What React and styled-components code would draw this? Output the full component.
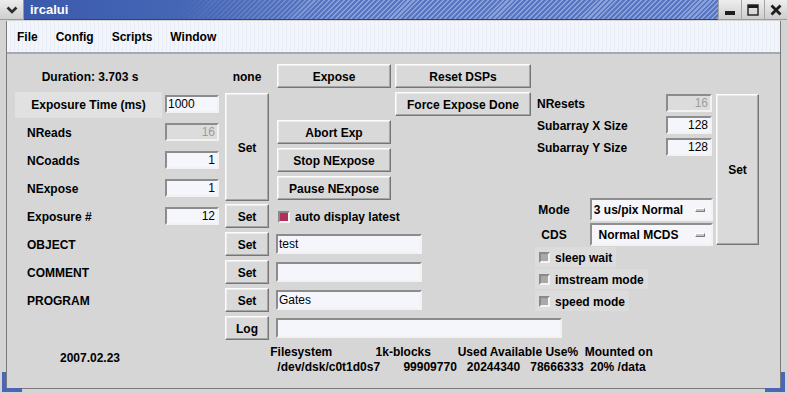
import React from 'react';
import styled, { createGlobalStyle, css } from 'styled-components';

const GlobalStyle = createGlobalStyle`
  html, body {
    margin: 0;
    padding: 0;
    background: #d4d4d4;
  }
  body {
    font-family: "Liberation Sans", Arial, Helvetica, sans-serif;
    font-size: 12px;
    color: #000;
  }
`;

const raised = css`
  border: 1px solid;
  border-color: #fcfcfc #767676 #767676 #fcfcfc;
  box-shadow: inset -1px -1px 0 #a6a6a6, inset 1px 1px 0 #ebebeb;
`;

const sunken = css`
  border: 2px solid;
  border-color: #8c8c8c #f2f2f2 #f2f2f2 #8c8c8c;
`;

const Window = styled.div`
  position: relative;
  width: 787px;
  height: 393px;
  display: flex;
  flex-direction: column;
  background: #d4d4d4;
  overflow: hidden;
`;

const TitleBar = styled.div`
  height: 20px;
  display: flex;
  box-sizing: border-box;
`;

const MenuButton = styled.div`
  width: 23px;
  display: flex;
  align-items: center;
  justify-content: center;
  background: linear-gradient(#ececec, #cfcfcf);
  border-right: 1px solid #9a9a9a;
  border-bottom: 1px solid #9a9a9a;
`;

const Caption = styled.div`
  flex: 1;
  display: flex;
  align-items: center;
  padding-left: 6px;
  color: #fff;
  font-weight: bold;
  font-size: 13px;
  border-bottom: 1px solid #2c4383;
  background:
    linear-gradient(90deg, #3b5aac 0%, #4565b5 22%, rgba(76, 106, 186, 0) 45%),
    repeating-linear-gradient(135deg, #5876c2 0px, #5876c2 2px, #8aa1da 2px, #8aa1da 3.5px);
`;

const WinButton = styled.div`
  width: 22px;
  display: flex;
  align-items: center;
  justify-content: center;
  background: linear-gradient(#eeeeee, #cdcdcd);
  border-left: 1px solid #a4a4a4;
  border-bottom: 1px solid #9a9a9a;
`;

const Body = styled.div`
  flex: 1;
  display: flex;
  padding: 1px 6px 4px 6px;
`;

const Client = styled.div`
  flex: 1;
  display: flex;
  flex-direction: column;
  border: 1px solid #7a7a7a;
  border-top: none;
  background: #d6d6d6;
`;

const MenuBar = styled.div`
  height: 31px;
  display: flex;
  align-items: center;
  padding-left: 1px;
  background: repeating-linear-gradient(90deg, #f2f5fb 0px, #f2f5fb 3px, #e9edf6 3px, #e9edf6 4px);
  border-bottom: 2px solid #a7a9b2;
`;

const MenuItem = styled.div`
  padding: 0 9px;
  font-weight: bold;
  font-size: 12px;
`;

const Panel = styled.div`
  flex: 1;
  display: grid;
  grid-template-columns: 150px 60px 52px 118px 140px 131px 50px 43px;
  grid-template-rows: repeat(10, 28px) auto;
  align-content: start;
  padding: 8px 0 0 8px;
  font-weight: bold;
`;

const Cell = styled.div`
  grid-column: ${p => p.$col};
  grid-row: ${p => p.$row};
  align-self: center;
  justify-self: ${p => p.$justify || 'stretch'};
  text-align: ${p => p.$align || 'left'};
  padding-top: 1px;
`;

const Label = styled(Cell)`
  grid-column: 1;
  padding-left: 12px;
`;

const HotLabel = styled(Cell)`
  grid-column: 1;
  align-self: end;
  width: 147px;
  height: 26px;
  line-height: 26px;
  padding-top: 0;
  text-align: center;
  background: #e1e1e1;
`;

const Btn = styled.button`
  ${raised};
  grid-column: ${p => p.$col};
  grid-row: ${p => p.$row};
  align-self: ${p => p.$tall ? 'stretch' : 'center'};
  justify-self: start;
  width: ${p => p.$w}px;
  height: ${p => p.$tall ? 'auto' : '24px'};
  margin: ${p => p.$tall ? '3px 0 1px' : '0'};
  padding: 1px 0 0;
  background: #d9d9d9;
  font-family: inherit;
  font-weight: bold;
  font-size: 12px;
  color: #000;
`;

const Entry = styled.input`
  ${sunken};
  grid-column: ${p => p.$col};
  grid-row: ${p => p.$row};
  align-self: center;
  justify-self: start;
  box-sizing: border-box;
  width: ${p => p.$w}px;
  height: ${p => p.$h || 18}px;
  padding: 0 2px 0 1px;
  margin: 0;
  outline: none;
  background: ${p => p.disabled ? '#dcdcdc' : '#f5f5fc'};
  color: ${p => p.disabled ? '#9c9c9c' : '#000'};
  text-align: ${p => p.$right ? 'right' : 'left'};
  font-family: inherit;
  font-size: 12px;
  font-weight: normal;
`;

const Box = styled.span`
  display: inline-block;
  box-sizing: border-box;
  width: ${p => p.$on ? 12 : 11}px;
  height: ${p => p.$on ? 12 : 11}px;
  border: 2px solid;
  border-color: #8a8a8a #f4f4f4 #f4f4f4 #8a8a8a;
  background: ${p => p.$on ? '#b0305e' : '#a9a9a9'};
`;

const CheckLine = styled.div`
  grid-column: ${p => p.$col};
  grid-row: ${p => p.$row};
  align-self: ${p => p.$end ? 'end' : 'center'};
  justify-self: start;
  display: flex;
  align-items: center;
  gap: 5px;
  height: 20px;
  padding: 1px 4px 0 ${p => p.$lpad ?? 4}px;
  box-sizing: border-box;
  background: ${p => p.$hl ? '#dcdcdc' : 'transparent'};
`;

const Side = styled.div`
  grid-column: 6 / span 3;
  grid-row: 2 / span 8;
  display: grid;
  grid-template-columns: 55px 76px 50px 43px;
  grid-template-rows: 22px 22px 22px 39px 25px 24px 22px 22px 22px;
  padding-top: 2px;
`;

const SideLabel = styled(Cell)`
  grid-column: 1 / span 2;
  padding-left: 2px;
`;

const ModeLabel = styled(Cell)`
  grid-column: 1;
  width: 38px;
  text-align: center;
`;

const Dropdown = styled.div`
  grid-column: 2 / span 2;
  grid-row: ${p => p.$row};
  align-self: center;
  justify-self: start;
  box-sizing: border-box;
  width: 123px;
  height: 23px;
  border: 2px solid;
  border-color: #8e8e8e #f2f2f2 #f2f2f2 #8e8e8e;
  background: #f5f5fa;
  display: flex;
  align-items: center;
  padding: 1px 6px 0 0;
`;

const DropText = styled.span`
  flex: 1;
  text-align: center;
  margin-right: 10px;
`;

const Indicator = styled.span`
  width: 10px;
  height: 4px;
  box-sizing: border-box;
  border: 1px solid;
  border-color: #ffffff #7c7c7c #7c7c7c #ffffff;
  background: #c4c4c4;
`;

const DfText = styled.div`
  grid-column: 3 / span 5;
  grid-row: 11;
  padding: 3px 18px 0 0;
  text-align: center;
  white-space: pre;
  line-height: 15px;
`;

const DateText = styled.div`
  grid-column: 1;
  grid-row: 11;
  align-self: start;
  text-align: center;
  padding-top: 3px;
  line-height: 26px;
`;

const Grip = styled.div`
  position: absolute;
  bottom: 1px;
  ${p => p.$side}: 2px;
  width: 20px;
  height: 20px;
  box-sizing: border-box;
  border-bottom: 4px solid #4a66b4;
  ${p => p.$side === 'left' ? 'border-left' : 'border-right'}: 4px solid #4a66b4;
`;

const fields = [
  { row: 3, name: 'NReads', value: '16', disabled: true },
  { row: 4, name: 'NCoadds', value: '1' },
  { row: 5, name: 'NExpose', value: '1' },
  { row: 6, name: 'Exposure #', value: '12' },
];

const notes = [
  { row: 7, name: 'OBJECT', value: 'test' },
  { row: 8, name: 'COMMENT', value: '' },
  { row: 9, name: 'PROGRAM', value: 'Gates' },
];

const sizes = [
  { row: 1, name: 'NResets', value: '16', disabled: true },
  { row: 2, name: 'Subarray X Size', value: '128' },
  { row: 3, name: 'Subarray Y Size', value: '128' },
];

const modes = [
  { row: 7, name: 'sleep wait' },
  { row: 8, name: 'imstream mode' },
  { row: 9, name: 'speed mode' },
];

export default function App() {
  return (
    <>
      <GlobalStyle />
      <Window>
        <TitleBar>
          <MenuButton>
            <svg width="12" height="8" viewBox="0 0 12 8">
              <path d="M1.5 1.5 L6 6 L10.5 1.5" fill="none" stroke="#2b2b2b" strokeWidth="2.6" />
            </svg>
          </MenuButton>
          <Caption>ircalui</Caption>
          <WinButton>
            <svg width="12" height="12" viewBox="0 0 12 12">
              <rect x="1" y="7" width="10" height="4" fill="#1e1e1e" />
            </svg>
          </WinButton>
          <WinButton>
            <svg width="12" height="12" viewBox="0 0 12 12">
              <rect x="1" y="1" width="10" height="10" fill="none" stroke="#1e1e1e" strokeWidth="1.4" />
              <rect x="1" y="1" width="10" height="3" fill="#1e1e1e" />
            </svg>
          </WinButton>
          <WinButton>
            <svg width="12" height="12" viewBox="0 0 12 12">
              <path d="M1.5 1.5 L10.5 10.5 M10.5 1.5 L1.5 10.5" stroke="#1e1e1e" strokeWidth="2.8" />
            </svg>
          </WinButton>
        </TitleBar>
        <Body>
          <Client>
            <MenuBar>
              <MenuItem>File</MenuItem>
              <MenuItem>Config</MenuItem>
              <MenuItem>Scripts</MenuItem>
              <MenuItem>Window</MenuItem>
            </MenuBar>
            <Panel>
              <Cell $col={1} $row={1} $align="center">Duration: 3.703 s</Cell>
              <Cell $col={3} $row={1} $align="center" style={{ width: 44 }}>none</Cell>
              <Btn $col={4} $row={1} $w={114}>Expose</Btn>
              <Btn $col={5} $row={1} $w={136}>Reset DSPs</Btn>

              <HotLabel $row={2}>Exposure Time (ms)</HotLabel>
              <Entry $col={2} $row={2} $w={54} defaultValue="1000" readOnly />
              <Btn $col={3} $row="2 / span 4" $w={44} $tall>Set</Btn>
              <Btn $col={5} $row={2} $w={136}>Force Expose Done</Btn>

              {fields.map(f => (
                <React.Fragment key={f.name}>
                  <Label $row={f.row}>{f.name}</Label>
                  <Entry $col={2} $row={f.row} $w={54} $right defaultValue={f.value} disabled={f.disabled} readOnly />
                </React.Fragment>
              ))}
              <Btn $col={4} $row={3} $w={114}>Abort Exp</Btn>
              <Btn $col={4} $row={4} $w={114}>Stop NExpose</Btn>
              <Btn $col={4} $row={5} $w={114}>Pause NExpose</Btn>

              <Btn $col={3} $row={6} $w={44}>Set</Btn>
              <CheckLine $col="4 / span 2" $row={6} $lpad={1}>
                <Box $on />
                <span>auto display latest</span>
              </CheckLine>

              {notes.map(n => (
                <React.Fragment key={n.name}>
                  <Label $row={n.row}>{n.name}</Label>
                  <Btn $col={3} $row={n.row} $w={44}>Set</Btn>
                  <Entry $col="4 / span 2" $row={n.row} $w={146} $h={20} defaultValue={n.value} readOnly style={{ marginLeft: -1 }} />
                </React.Fragment>
              ))}

              <Btn $col={3} $row={10} $w={44}>Log</Btn>
              <Entry $col="4 / span 3" $row={10} $w={286} $h={20} defaultValue="" readOnly style={{ marginLeft: -1 }} />

              <Side>
                {sizes.map(s => (
                  <React.Fragment key={s.name}>
                    <SideLabel $row={s.row}>{s.name}</SideLabel>
                    <Entry $col={3} $row={s.row} $w={46} $right defaultValue={s.value} disabled={s.disabled} readOnly />
                  </React.Fragment>
                ))}
                <Btn $col={4} $row="1 / span 6" $w={43} $tall style={{ marginTop: 2 }}>Set</Btn>

                <ModeLabel $row={5}>Mode</ModeLabel>
                <Dropdown $row={5}>
                  <DropText>3 us/pix Normal</DropText>
                  <Indicator />
                </Dropdown>
                <ModeLabel $row={6}>CDS</ModeLabel>
                <Dropdown $row={6}>
                  <DropText>Normal MCDS</DropText>
                  <Indicator />
                </Dropdown>

                {modes.map(m => (
                  <CheckLine key={m.name} $col="1 / span 3" $row={m.row} $hl>
                    <Box />
                    <span>{m.name}</span>
                  </CheckLine>
                ))}
              </Side>

              <DateText>2007.02.23</DateText>
              <DfText>
                {'Filesystem             1k-blocks        Used Available Use%  Mounted on\n'}
                {'/dev/dsk/c0t1d0s7       99909770   20244340   78666333  20% /data'}
              </DfText>
            </Panel>
          </Client>
        </Body>
        <Grip $side="left" />
        <Grip $side="right" />
      </Window>
    </>
  );
}
